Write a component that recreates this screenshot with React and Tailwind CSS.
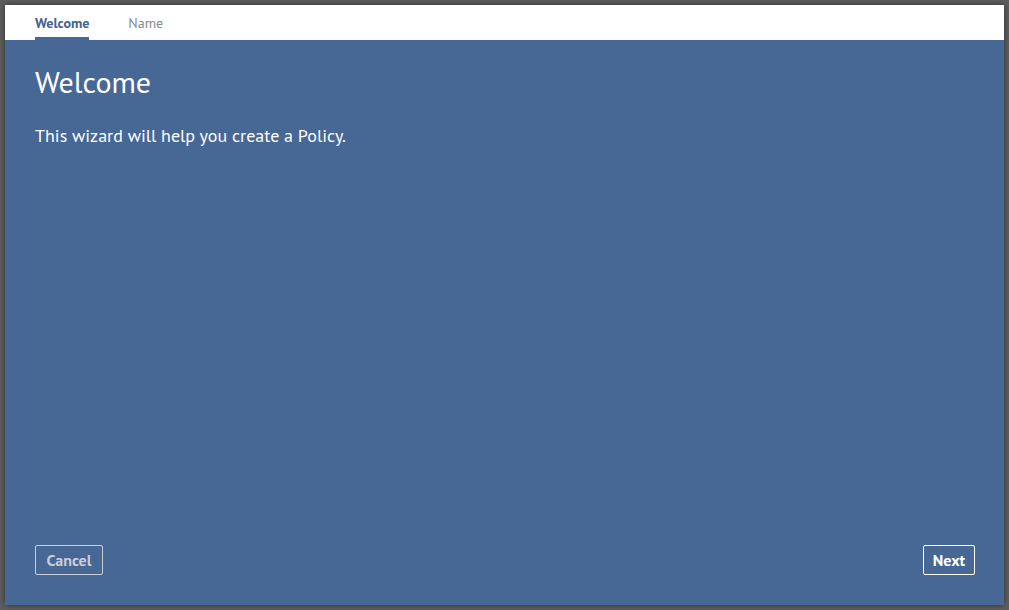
export default function App() {
  return (
    <div className="h-[610px] w-[1009px] bg-[#5e5e5e] p-[5px] font-['PT_Sans','Noto_Sans',sans-serif]">
      <div className="flex h-full flex-col bg-[#476795] shadow-[0_0_6px_rgba(0,0,0,0.5)]">
        <div className="flex h-[35px] items-stretch gap-[39px] bg-white px-[30px]">
          <div className="flex flex-col justify-end">
            <span className="pb-[7px] text-[14px] font-bold leading-none text-[#44618f]">Welcome</span>
            <div className="h-[3px] bg-[#476795]"></div>
          </div>
          <div className="flex flex-col justify-end">
            <span className="pb-[10px] text-[14px] leading-none text-[#8a8a8a]">Name</span>
          </div>
        </div>
        <div className="flex flex-1 flex-col pl-[30px] pr-[29px] pt-[24px] pb-[30px] text-white">
          <h1 className="text-[30px] leading-[36px]">Welcome</h1>
          <p className="mt-[25px] text-[18px] leading-[22px]">This wizard will help you create a Policy.</p>
          <div className="mt-auto flex justify-between">
            <button className="h-[30px] w-[68px] rounded-[2px] border border-[#c8cdd6] text-[16px] font-bold text-[#c8cdd6]">Cancel</button>
            <button className="h-[30px] w-[52px] rounded-[2px] border border-white text-[16px] font-bold text-white">Next</button>
          </div>
        </div>
      </div>
    </div>
  );
}
